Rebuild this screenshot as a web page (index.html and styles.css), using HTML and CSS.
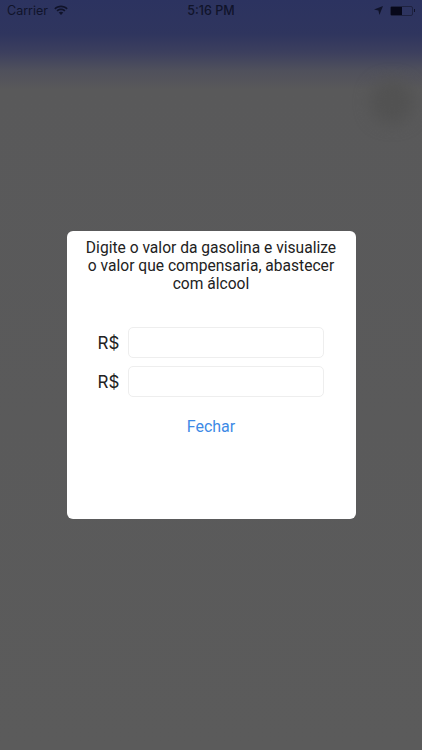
FILE: index.html
```html
<!DOCTYPE html>
<html lang="pt-BR">
<head>
    <meta charset="UTF-8">
    <meta name="viewport" content="width=device-width, initial-scale=1.0">
    <title>Gasolina ou Álcool</title>
    <link rel="stylesheet" href="styles.css">
</head>
<body>
    <!-- Botão borrado atrás da janela -->
    <div class="blur-spot"></div>

    <!-- Barra de status -->
    <div class="status-bar">
        <div class="status-left">
            <span>Carrier</span>
            <svg class="wifi" width="14" height="10" viewBox="0 0 14 10">
                <path d="M0.3 3.2C4 -0.4 10 -0.4 13.7 3.2L12.6 4.4C9.5 1.4 4.5 1.4 1.4 4.4Z" fill="#10132a"/>
                <path d="M2.5 5.4C5 3 9 3 11.5 5.4L10.4 6.6C8.5 4.8 5.5 4.8 3.6 6.6Z" fill="#10132a"/>
                <path d="M4.7 7.6C6 6.5 8 6.5 9.3 7.6L7 10Z" fill="#10132a"/>
            </svg>
        </div>
        <div class="status-time">5:16 PM</div>
        <div class="status-right">
            <svg width="9" height="9" viewBox="0 0 9 9">
                <path d="M9 0L5.4 9L4.4 4.6L0 3.6Z" fill="#10132a"/>
            </svg>
            <div class="battery">
                <div class="battery-level"></div>
            </div>
            <div class="battery-tip"></div>
        </div>
    </div>

    <!-- Janela do cálculo -->
    <div class="modal">
        <p class="modal-text">Digite o valor da gasolina e visualize o valor que compensaria, abastecer com álcool</p>
        <div class="field-list">
            <div class="field">
                <label for="gasolina">R$</label>
                <input type="text" id="gasolina">
            </div>
            <div class="field">
                <label for="alcool">R$</label>
                <input type="text" id="alcool">
            </div>
        </div>
        <button class="close-button" type="button">Fechar</button>
    </div>
</body>
</html>
```

FILE: styles.css
```css
html, body {
    height: 100%;
}
body {
    font-family: "Liberation Sans", Arial, sans-serif;
    margin: 0;
    padding: 0;
    height: 750px;
    overflow: hidden;
    position: relative;
    display: flex;
    justify-content: center;
    align-items: center;
    background: linear-gradient(to bottom, #2c3360 0, #2f355e 34px, #3c3f5e 52px, #4f505c 70px, #59595a 90px, #5b5b5b 100%);
}
.blur-spot {
    position: absolute;
    top: 80px;
    right: 8px;
    width: 44px;
    height: 44px;
    border-radius: 50%;
    background-color: #525252;
    filter: blur(8px);
}
.status-bar {
    position: absolute;
    top: 0;
    left: 0;
    right: 0;
    height: 21px;
    padding: 0 7px;
    display: flex;
    justify-content: space-between;
    align-items: center;
    font-family: Inter, "Liberation Sans", sans-serif;
    font-size: 12.5px;
    color: #10132a;
}
.status-left {
    display: flex;
    align-items: center;
    gap: 6px;
    width: 120px;
}
.status-left .wifi {
    margin-bottom: 2px;
}
.status-time {
    font-weight: 500;
}
.status-right {
    display: flex;
    align-items: center;
    justify-content: flex-end;
    width: 120px;
}
.battery {
    width: 23px;
    height: 10px;
    margin-left: 7px;
    box-sizing: border-box;
    border: 1px solid #1e2240;
    border-radius: 2px;
    display: flex;
}
.battery-level {
    width: 11px;
    background-color: #07081a;
}
.battery-tip {
    width: 1px;
    height: 3px;
    margin-left: 1px;
    background-color: #10132a;
}
.modal {
    position: relative;
    width: 289px;
    height: 288px;
    box-sizing: border-box;
    padding: 8px 14px 0;
    background-color: white;
    border-radius: 6px;
    display: flex;
    flex-direction: column;
    align-items: center;
}
.modal-text {
    margin: 0;
    font-family: Roboto, "Liberation Sans", sans-serif;
    font-size: 15.6px;
    line-height: 18px;
    text-align: center;
    color: #222222;
}
.field-list {
    margin-top: 34px;
    display: flex;
    flex-direction: column;
    gap: 8px;
    align-self: stretch;
}
.field {
    display: flex;
    align-items: center;
    gap: 9px;
    padding-left: 17px;
}
.field label {
    font-family: Inter, "Liberation Sans", sans-serif;
    font-size: 17px;
    color: #222222;
}
.field input {
    width: 196px;
    height: 31px;
    box-sizing: border-box;
    border: 1px solid #eeeeee;
    border-radius: 5px;
    background-color: white;
    outline: none;
}
.close-button {
    margin-top: 20px;
    padding: 0;
    border: none;
    background: none;
    font-family: Roboto, "Liberation Sans", sans-serif;
    font-size: 16px;
    color: #3d8ae6;
}
```
